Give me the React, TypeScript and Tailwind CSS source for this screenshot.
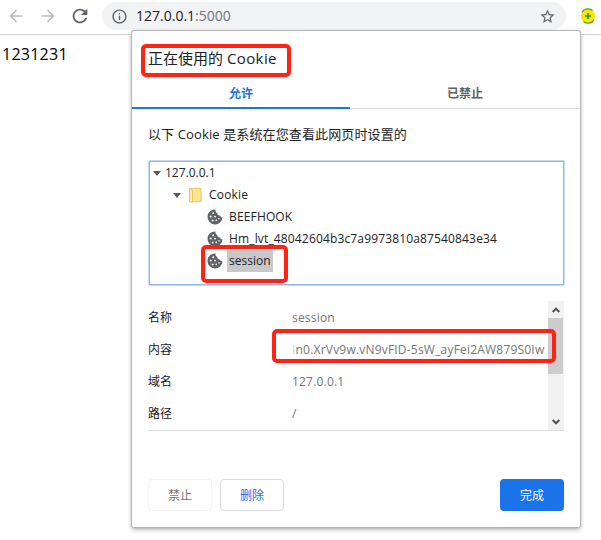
import { useState } from "react";
import type { ReactNode } from "react";
import { MdArrowBack, MdArrowForward, MdInfoOutline, MdRefresh, MdStarBorder } from "react-icons/md";
import clsx from "clsx";

const cookies = ["BEEFHOOK", "Hm_lvt_48042604b3c7a9973810a87540843e34", "session"];

const details: { label: string; value: ReactNode }[] = [
  { label: "名称", value: "session" },
  {
    label: "内容",
    value: (
      <>
        <span className="text-[#b5dcf5]">I</span>n0.XrVv9w.vN9vFID-5sW_ayFei2AW879S0Iw
      </>
    ),
  },
  { label: "域名", value: "127.0.0.1" },
  { label: "路径", value: "/" },
];

function CookieIcon() {
  return (
    <svg viewBox="0 0 16 16" className="h-4 w-4 shrink-0">
      <path
        d="M8.500.500A7.500 7.500 0 1 0 15.500 8.300c-1.300.1-2.300-.6-2.500-1.800-1.700.2-2.900-.9-2.700-2.500C8.900 3.500 8.200 2.200 8.500.5z"
        fill="#5f6368"
      />
      <g fill="#fff">
        <circle cx="6.200" cy="4.200" r="1" />
        <circle cx="3.700" cy="7.500" r="1" />
        <circle cx="8" cy="7.600" r=".9" />
        <circle cx="5.600" cy="11.500" r="1" />
        <circle cx="9.300" cy="11.300" r=".9" />
        <circle cx="12" cy="9.700" r=".8" />
      </g>
    </svg>
  );
}

function FolderIcon() {
  return (
    <svg viewBox="0 0 13 15" className="h-[15px] w-[13px] shrink-0">
      <path d="M.5.500h8v9h3.500v4H.5z" fill="#ffe694" stroke="#e8c765" />
      <path d="M9 .5h3v13H.5V.500z" fill="#ffe694" stroke="#e8c765" />
      <path d="M.5.500 3.500 2.500v12L.5 13.500z" fill="#ffeaa6" stroke="#e8c765" />
    </svg>
  );
}

function Caret() {
  return (
    <svg viewBox="0 0 8 5" className="h-[5px] w-2 shrink-0">
      <path d="M0 0h8L4 5z" fill="#5a5a5a" />
    </svg>
  );
}

function ScrollArrow({ down = false }: { down?: boolean }) {
  return (
    <div className="flex h-[17px] items-center justify-center">
      <svg viewBox="0 0 8 6" className={clsx("h-1.5 w-2", down && "rotate-180")}>
        <path d="M.7 5 4 1.700 7.300 5" fill="none" stroke="#505050" strokeWidth="2" />
      </svg>
    </div>
  );
}

function Toolbar() {
  return (
    <div className="flex h-[35px] items-start border-b border-[#d5d7da] pt-0.5">
      <div className="flex h-7 items-center text-[#bcbec1]">
        <MdArrowBack className="ml-1.5 h-5 w-5" />
        <MdArrowForward className="ml-3 h-5 w-5" />
        <MdRefresh className="ml-[11px] h-[22px] w-[22px] text-[#5f6368]" />
      </div>
      <div className="ml-[11px] flex h-7 w-[464px] items-center rounded-full bg-[#f1f3f4] pl-[9px] pr-2.5">
        <MdInfoOutline className="h-[17px] w-[17px] text-[#5f6368]" />
        <span className="ml-2 text-sm text-[#202124]">
          127.0.0.1<span className="text-[#70757a]">:5000</span>
        </span>
        <MdStarBorder className="ml-auto h-[17px] w-[17px] text-[#5f6368]" />
      </div>
      <svg viewBox="0 0 16 16" className="ml-[14px] mt-1.5 h-4 w-4">
        <circle cx="8" cy="8" r="7.200" fill="#ffe600" />
        <path d="M2 4.200A7 7 0 0 1 12.500 2.500M14 11.800A7 7 0 0 1 3.500 13.500" fill="none" stroke="#4ea344" strokeWidth="1.400" />
        <path d="M8 5v6M5 8h6" stroke="#4c9d3c" strokeWidth="2.200" />
      </svg>
    </div>
  );
}

function Tab({ active, onClick, children }: { active: boolean; onClick: () => void; children: ReactNode }) {
  return (
    <button
      onClick={onClick}
      className={clsx(
        "h-[31px] text-center text-xs font-bold",
        active
          ? "w-[218px] border-b-2 border-[#1a73e8] pt-0.5 text-[#1a73e8]"
          : "flex-1 border-b border-[#dadce0] pt-px text-[#5f6368]"
      )}
    >
      {children}
    </button>
  );
}

function CookieTree({ selected, onSelect }: { selected: string; onSelect: (name: string) => void }) {
  return (
    <div className="mx-4 h-[126px] w-[417px] rounded-xs border border-[#c3d8f6] text-xs text-[#202124]">
      <div className="h-full border border-[#94b6ea]">
        <div className="flex h-[22px] items-center gap-1 pl-[3px]">
          <Caret />
          <span>127.0.0.1</span>
        </div>
        <div className="flex h-[22px] items-center pl-[23px]">
          <Caret />
          <span className="ml-2">
            <FolderIcon />
          </span>
          <span className="ml-[7px] tracking-[0.2px]">Cookie</span>
        </div>
        {cookies.map((name) => (
          <div key={name} onClick={() => onSelect(name)} className="flex h-[22px] items-center gap-1 pl-[57px]">
            <CookieIcon />
            <span
              className={clsx(
                "h-[22px] px-0.5 leading-[22px]",
                name === selected ? "bg-[#c8c8c8]" : "tracking-[0.15px]"
              )}
            >
              {name}
            </span>
          </div>
        ))}
      </div>
    </div>
  );
}

function DetailsPanel() {
  return (
    <div className="mx-4 mt-[15px] flex h-[130px] border-b border-[#dadce0] text-xs">
      <div className="flex-1 pt-px">
        {details.map((row) => (
          <div key={row.label} className="flex h-8 items-center">
            <span className="w-36 text-[#202124]">{row.label}</span>
            <span className="whitespace-nowrap tracking-[0.2px] text-[#757575]">{row.value}</span>
          </div>
        ))}
      </div>
      <div className="flex w-4 flex-col bg-[#f1f1f1]">
        <ScrollArrow />
        <div className="mr-px h-14 bg-[#cdcdcd]" />
        <div className="mt-auto">
          <ScrollArrow down />
        </div>
      </div>
    </div>
  );
}

export default function App() {
  const [tab, setTab] = useState("allowed");
  const [selected, setSelected] = useState("session");

  return (
    <div className="relative h-[540px] w-[601px] overflow-hidden bg-white font-['Open_Sans','Noto_Sans_CJK_SC',sans-serif]">
      <Toolbar />
      <p className="ml-0.5 mt-[7px] text-base tracking-[0.25px] text-black">1231231</p>

      <div className="absolute left-[132px] top-[31px] flex h-[496px] w-[448px] flex-col rounded-xs bg-white shadow-[0_0_0_1px_#b5b5b5,0_2px_5px_rgba(0,0,0,0.4)]">
        <h1 className="mx-4 mt-[15px] h-8 text-[15px] leading-6 text-[#202124]">
          正在使用的 <span className="tracking-[0.4px]">Cookie</span>
        </h1>
        <div className="flex">
          <Tab active={tab === "allowed"} onClick={() => setTab("allowed")}>
            允许
          </Tab>
          <Tab active={tab === "blocked"} onClick={() => setTab("blocked")}>
            已禁止
          </Tab>
        </div>
        <p className="mx-4 mb-3.5 mt-[15px] h-[22px] text-[13px] leading-5 tracking-[0.12px] text-[#202124]">
          以下 Cookie 是系统在您查看此网页时设置的
        </p>
        <CookieTree selected={selected} onSelect={setSelected} />
        <DetailsPanel />
        <div className="mx-4 mt-12 flex text-xs">
          <button className="h-8 w-16 rounded border border-[#f1f3f4] pt-0.5 text-[#757575]">禁止</button>
          <button className="ml-2 h-8 w-16 rounded border border-[#dadce0] pt-0.5 text-[#1a73e8]">删除</button>
          <button className="ml-auto h-8 w-16 rounded bg-[#1a73e8] pt-0.5 text-white">完成</button>
        </div>
      </div>

      {/* Highlight marks drawn over the dialog */}
      <div className="pointer-events-none absolute left-[141px] top-[44px] h-[33px] w-[150px] rounded-[5px] border-4 border-[#ff2316]" />
      <div className="pointer-events-none absolute left-[201px] top-[245px] h-[38px] w-[87px] rounded-[5px] border-4 border-[#ff2316]" />
      <div className="pointer-events-none absolute left-[272px] top-[329px] h-[34px] w-[284px] rounded-[5px] border-4 border-[#ff2316]" />
    </div>
  );
}
